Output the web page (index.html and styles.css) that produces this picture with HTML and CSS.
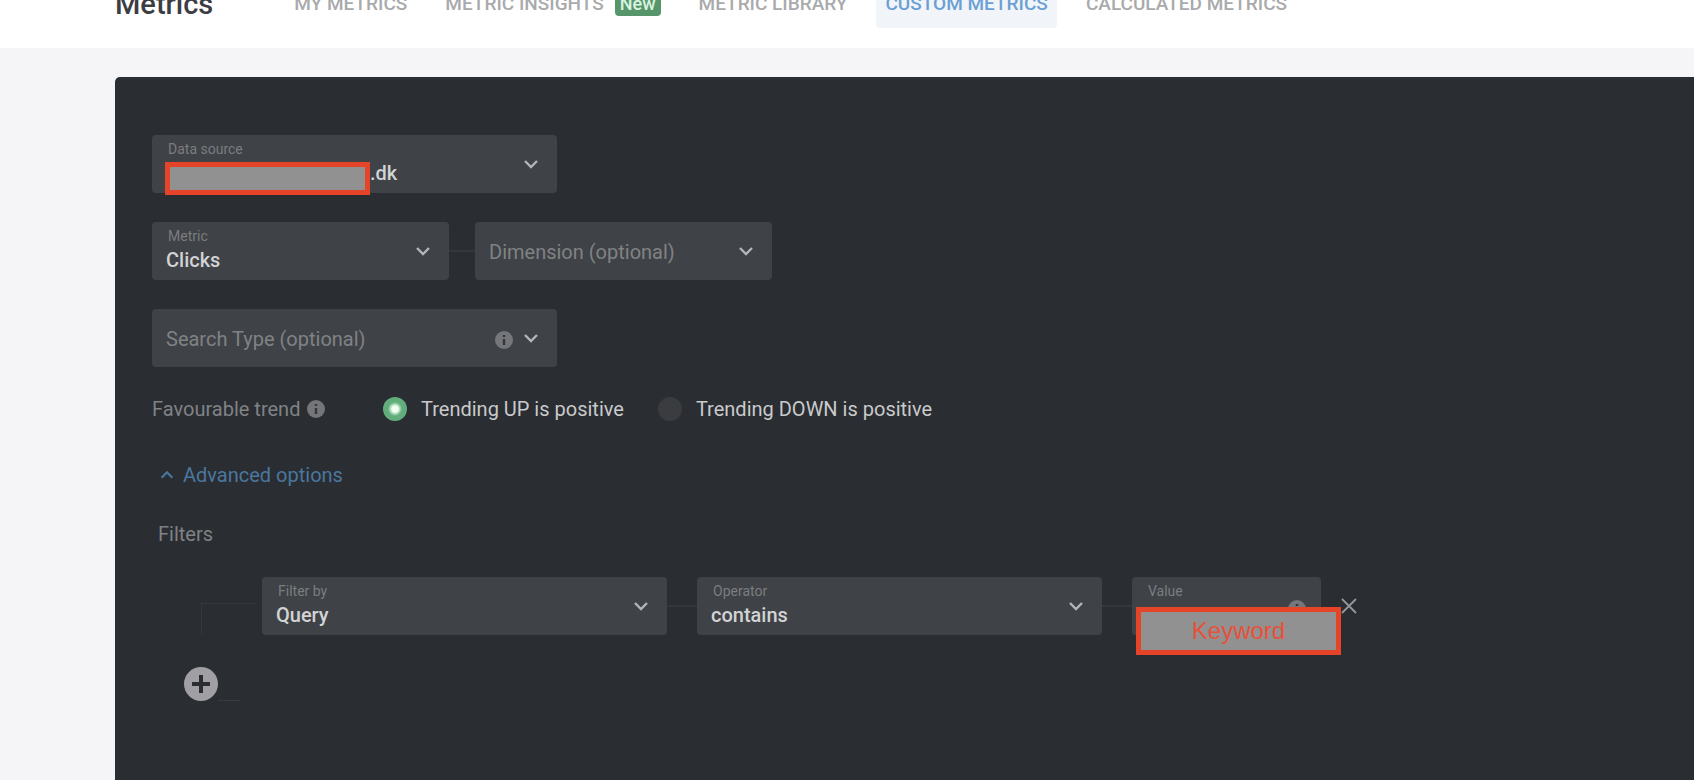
FILE: index.html
```html
<!DOCTYPE html>
<html lang="en">
<head>
<meta charset="utf-8">
<title>Metrics</title>
<link rel="stylesheet" href="styles.css">
</head>
<body>
<svg class="sprite" aria-hidden="true">
  <symbol id="chevron" viewBox="0 0 18 18"><path d="M3 6l6 6 6-6" fill="none" stroke="currentColor" stroke-width="2.4"/></symbol>
  <symbol id="info" viewBox="0 0 18 18"><circle cx="9" cy="9" r="9" fill="currentColor"/><path d="M9 8v6M9 4v2" stroke="#33363a" stroke-width="2.4"/></symbol>
</svg>
<header class="header">
  <h1 class="title">Metrics</h1>
  <nav class="tabs">
    <a class="tab" href="#">MY METRICS</a>
    <a class="tab" href="#">METRIC INSIGHTS <span class="badge">New</span></a>
    <a class="tab" href="#">METRIC LIBRARY</a>
    <a class="tab tab-active" href="#">CUSTOM METRICS</a>
    <a class="tab" href="#">CALCULATED METRICS</a>
  </nav>
</header>
<main class="panel">
  <form class="form">
    <div class="row">
      <div class="field field-wide">
        <label class="caption" for="source">Data source</label>
        <select class="control source" id="source"><option>.dk</option></select>
        <svg class="chevron"><use href="#chevron"/></svg>
        <span class="redaction redaction-source"></span>
      </div>
    </div>
    <div class="row">
      <div class="field field-mid">
        <label class="caption" for="metric">Metric</label>
        <select class="control" id="metric"><option>Clicks</option></select>
        <svg class="chevron"><use href="#chevron"/></svg>
      </div>
      <span class="link-line link-short"></span>
      <div class="field field-mid">
        <select class="control control-empty" aria-label="Dimension"><option>Dimension (optional)</option></select>
        <svg class="chevron"><use href="#chevron"/></svg>
      </div>
    </div>
    <div class="row">
      <div class="field field-wide">
        <select class="control control-empty" aria-label="Search Type"><option>Search Type (optional)</option></select>
        <svg class="info info-field"><use href="#info"/></svg>
        <svg class="chevron"><use href="#chevron"/></svg>
      </div>
    </div>
    <div class="trend" role="radiogroup" aria-labelledby="trend-label">
      <span class="trend-label" id="trend-label">Favourable trend <svg class="info"><use href="#info"/></svg></span>
      <label class="choice"><input class="radio" type="radio" name="trend" checked>Trending UP is positive</label>
      <label class="choice"><input class="radio" type="radio" name="trend">Trending DOWN is positive</label>
    </div>
    <button class="advanced" type="button"><svg class="caret"><use href="#chevron"/></svg>Advanced options</button>
    <h2 class="subhead">Filters</h2>
    <div class="filters">
      <span class="branch"></span>
      <div class="field field-wide">
        <label class="caption" for="filter">Filter by</label>
        <select class="control" id="filter"><option>Query</option></select>
        <svg class="chevron"><use href="#chevron"/></svg>
      </div>
      <span class="link-line"></span>
      <div class="field field-wide">
        <label class="caption" for="operator">Operator</label>
        <select class="control" id="operator"><option>contains</option></select>
        <svg class="chevron"><use href="#chevron"/></svg>
      </div>
      <span class="link-line"></span>
      <div class="field field-value">
        <label class="caption" for="value">Value</label>
        <input class="control" id="value" type="text">
        <svg class="info info-value"><use href="#info"/></svg>
        <span class="redaction redaction-value">Keyword</span>
      </div>
      <button class="close" type="button" aria-label="Remove filter"><svg class="close-icon" viewBox="0 0 16 16"><path d="M1 1l14 14M15 1L1 15" stroke="currentColor" stroke-width="1.8"/></svg></button>
    </div>
    <div class="add-row">
      <button class="add" type="button" aria-label="Add filter"><svg class="add-icon" viewBox="0 0 34 34"><circle cx="17" cy="17" r="17" fill="#a0a0a4"/><path d="M17 8v18M8 17h18" stroke="#2b2c30" stroke-width="4"/></svg></button>
      <span class="add-line"></span>
    </div>
  </form>
</main>
</body>
</html>
```
FILE: styles.css
```css
* { box-sizing: border-box; }
html { height: 100%; overflow: hidden; }
body {
  margin: 0;
  height: 100%;
  display: flex;
  flex-direction: column;
  overflow: hidden;
  background: #f5f5f7;
  font-family: Roboto, "Liberation Sans", sans-serif;
  font-size: 20px;
  line-height: 24px;
}
button, input, select { font: inherit; }
button { padding: 0; border: 0; background: none; }
.sprite { display: none; }

.header {
  flex: none;
  display: flex;
  align-items: center;
  gap: 72px;
  height: 88px;
  margin-top: -40px;
  padding-left: 115px;
  background: #fff;
}
.title { margin: 0; font-size: 29px; font-weight: 500; color: #3c3d42; }
.tabs { display: flex; gap: 20px; }
.tab {
  display: flex;
  align-items: center;
  gap: 11px;
  height: 48px;
  padding: 0 9px;
  border-radius: 4px;
  font-size: 19px;
  font-weight: 500;
  color: #a9aaac;
  text-decoration: none;
  white-space: nowrap;
}
.tab-active { background: #f1f5fa; color: #6c9fd3; }
.badge { padding: 0 5px; border-radius: 4px; background: #57966b; color: #d9f3e0; font-size: 18px; }

.panel {
  flex: 1;
  margin: 29px 0 0 115px;
  padding: 58px 0 0 37px;
  border-radius: 5px 0 0 0;
  background: #2a2d31;
}
.form { display: flex; flex-direction: column; align-items: flex-start; }
.row { display: flex; align-items: center; margin-bottom: 29px; }
.field { position: relative; height: 58px; border-radius: 4px; background: #3f4246; }
.field-wide { width: 405px; }
.field-mid { width: 297px; }
.field-value { width: 189px; }
.caption { position: absolute; left: 16px; top: 6px; font-size: 14px; line-height: 16px; color: #7b7d80; }
.control {
  appearance: none;
  width: 100%;
  height: 100%;
  padding: 18px 50px 0 14px;
  border: 0;
  border-radius: 4px;
  background: transparent;
  color: #d2d3d5;
  font-weight: 500;
}
.control-empty { padding-top: 2px; color: #808285; font-weight: 400; }
.source { padding-left: 218px; }
.chevron { position: absolute; right: 17px; top: 20px; width: 18px; height: 18px; color: #b4b5b8; pointer-events: none; }
.info { width: 18px; height: 18px; color: #74767a; }
.info-field { position: absolute; right: 44px; top: 22px; }
.info-value { position: absolute; right: 15px; top: 23px; }
.link-line { width: 30px; height: 2px; background: #34373b; }
.link-short { width: 26px; }
.redaction { position: absolute; border: 5px solid #e64429; background: #919191; }
.redaction-source { left: 13px; top: 27px; width: 205px; height: 33px; }
.redaction-value {
  left: 4px;
  top: 30px;
  width: 205px;
  height: 48px;
  font: 24px/38px "Liberation Sans", Arial, sans-serif;
  text-align: center;
  color: #e8503a;
}

.trend { display: flex; align-items: center; height: 24px; margin: 1px 0 42px; }
.trend-label { display: flex; align-items: center; gap: 7px; width: 231px; color: #808285; }
.choice { display: flex; align-items: center; gap: 14px; margin-right: 34px; color: #c9cacc; }
.radio { appearance: none; width: 24px; height: 24px; margin: 0; border-radius: 50%; background: #3a3c40; }
.radio:checked { background: radial-gradient(circle, #f0fff2 3px, #61ae7c 7px); }
.advanced { display: flex; align-items: center; gap: 8px; height: 24px; margin-left: 7px; color: #4b779f; }
.caret { width: 16px; height: 16px; transform: rotate(180deg); }
.subhead { margin: 35px 0 31px 6px; font-size: 20px; font-weight: 400; color: #808285; }
.filters { display: flex; align-items: center; padding-left: 49px; }
.branch { align-self: flex-end; width: 55px; height: 32px; margin-right: 6px; border: solid #34373b; border-width: 1px 0 0 1px; }
.close { margin-left: 20px; color: #96979a; }
.close-icon { display: block; width: 16px; height: 16px; }
.add-row { display: flex; align-items: flex-end; margin: 32px 0 0 32px; }
.add, .add-icon { display: block; width: 34px; height: 34px; }
.add-line { width: 22px; height: 1px; background: #3a3b3f; }
```
